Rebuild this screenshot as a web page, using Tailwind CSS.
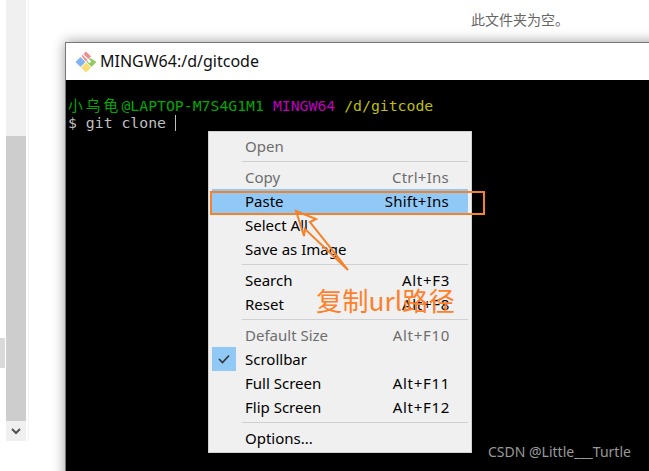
<!doctype html>
<html lang="en">
<head>
  <meta charset="UTF-8" />
  <title>MINGW64</title>
  <script src="https://cdn.jsdelivr.net/npm/@tailwindcss/browser@4"></script>
</head>
<body class="bg-white">
  <div class="relative w-[649px] h-[471px] overflow-hidden bg-white font-['Noto_Sans','Noto_Sans_CJK_SC',sans-serif]">

    <!-- page behind: scrollbar on the left -->
    <div class="absolute left-0 top-[338px] w-[5px] h-[30px] bg-[#d9d9d9]"></div>
    <div class="absolute left-[6px] top-0 w-[20px] h-[441px] flex flex-col bg-[#f0f0f0]">
      <div class="h-[136px]"></div>
      <div class="h-[285px] bg-[#cdcdcd]"></div>
      <div class="flex-1 flex items-center justify-center">
        <svg width="10" height="7" viewBox="0 0 10 7"><path d="M1 1l4 4 4-4" fill="none" stroke="#505050" stroke-width="2" /></svg>
      </div>
    </div>
    <div class="absolute left-[28px] top-0 w-[1px] h-[441px] bg-[#f2f2f2]"></div>
    <p class="absolute left-[471px] top-[9px] text-[14px] leading-[20px] text-[#666] font-['Noto_Sans_CJK_SC',sans-serif]">此文件夹为空。</p>

    <!-- terminal window -->
    <div class="absolute left-[65px] top-[42px] w-[600px] h-[440px] flex flex-col border border-[#777] shadow-[0_0_12px_rgba(0,0,0,0.4)]">
      <div class="h-[37px] bg-white flex items-center pl-[9px] gap-[3px]">
        <svg width="22" height="22" viewBox="0 0 22 22">
          <path d="M0.5 11L5.5 6l5 5-5 5z" fill="#7fb4f6" />
          <path d="M6.5 5l4.5-4.5L16 5.5l-1.5 1.5-3.5 3.5z" fill="#f28b8b" />
          <path d="M11.5 11L15.5 7l6 4-5 5z" fill="#93cb62" />
          <path d="M6 16.5l5-5 5 5-5 5z" fill="#fbdd74" />
          <path d="M8 3.5l6.5 6.5" stroke="#fff" stroke-width="1.2" />
          <circle cx="14.5" cy="10.5" r="1.4" fill="#fff" />
        </svg>
        <span class="pb-[2px] text-[16px] leading-[20px] text-[#111]">MINGW64:/d/gitcode</span>
      </div>
      <div class="flex-1 bg-black pt-[17px] pl-[2px] font-['DejaVu_Sans_Mono','Noto_Sans_CJK_SC',monospace] text-[14.8px] leading-[17px]">
        <div class="whitespace-pre"><span class="text-[#00a800]"><span class="tracking-[3px]">小乌龟</span>@LAPTOP-M7S4G1M1</span> <span class="text-[#bf00bf]">MINGW64</span> <span class="text-[#bfbf00]">/d/gitcode</span></div>
        <div class="flex items-center whitespace-pre text-[#bfbfbf]"><span>$ git clone </span><span class="w-[1px] h-[16px] bg-[#bfbfbf]"></span></div>
      </div>
    </div>

    <!-- context menu -->
    <div class="absolute left-[208px] top-[131px] w-[264px] h-[322px] flex flex-col pt-[2px] pl-[3px] pr-[3px] bg-[#f0f0f0] border border-[#a0a0a0]/40 text-[15px] text-black">
      <div class="h-[24px] flex items-center justify-between pl-[33px] pr-[19px] text-[#6d6d6d]"><span>Open</span></div>
      <div class="h-[7px] ml-[30px] flex items-center"><div class="w-full h-[1px] bg-[#d0d0d0]"></div></div>
      <div class="h-[24px] flex items-center justify-between pl-[33px] pr-[19px] text-[#6d6d6d]"><span>Copy</span><span class="tracking-[0.25px]">Ctrl+Ins</span></div>
      <div class="h-[24px] flex items-center justify-between pl-[33px] pr-[19px] bg-[#90c8f6]"><span>Paste</span><span class="tracking-[0.25px]">Shift+Ins</span></div>
      <div class="h-[24px] flex items-center justify-between pl-[33px] pr-[19px]"><span>Select All</span></div>
      <div class="h-[24px] flex items-center justify-between pl-[33px] pr-[19px]"><span>Save as Image</span></div>
      <div class="h-[7px] ml-[30px] flex items-center"><div class="w-full h-[1px] bg-[#d0d0d0]"></div></div>
      <div class="h-[24px] flex items-center justify-between pl-[33px] pr-[18px]"><span>Search</span><span class="tracking-[0.7px]">Alt+F3</span></div>
      <div class="h-[24px] flex items-center justify-between pl-[33px] pr-[18px]"><span>Reset</span><span class="tracking-[0.7px]">Alt+F8</span></div>
      <div class="h-[7px] ml-[30px] flex items-center"><div class="w-full h-[1px] bg-[#d0d0d0]"></div></div>
      <div class="h-[24px] flex items-center justify-between pl-[33px] pr-[18px] text-[#6d6d6d]"><span>Default Size</span><span class="tracking-[0.7px]">Alt+F10</span></div>
      <div class="relative h-[24px] flex items-center justify-between pl-[33px] pr-[19px]">
        <span>Scrollbar</span>
        <div class="absolute left-0 top-0 w-[24px] h-[24px] bg-[#90c8f6] flex items-center justify-center">
          <svg width="12" height="10" viewBox="0 0 12 10"><path d="M1 5l3.5 3.5L11 1.5" fill="none" stroke="#333" stroke-width="1.6" /></svg>
        </div>
      </div>
      <div class="h-[24px] flex items-center justify-between pl-[33px] pr-[18px]"><span>Full Screen</span><span class="tracking-[0.7px]">Alt+F11</span></div>
      <div class="h-[24px] flex items-center justify-between pl-[33px] pr-[18px]"><span>Flip Screen</span><span class="tracking-[0.7px]">Alt+F12</span></div>
      <div class="h-[7px] ml-[30px] flex items-center"><div class="w-full h-[1px] bg-[#d0d0d0]"></div></div>
      <div class="h-[24px] flex items-center justify-between pl-[33px] pr-[19px]"><span>Options...</span></div>
    </div>

    <!-- annotations drawn on top -->
    <div class="absolute left-[210px] top-[191px] w-[275px] h-[24px] border-2 border-[#f5812a]"></div>
    <svg class="absolute left-[290px] top-[205px]" width="70" height="75" viewBox="0 0 70 75">
      <path d="M6 6L26 14 20 17 58 65 15 24 14 31z" fill="none" stroke="#f5812a" stroke-width="2" stroke-linejoin="miter" />
    </svg>
    <p class="absolute left-[316px] top-[282px] text-[26.3px] leading-[36px] text-[#ff7f2a] font-['Noto_Sans_CJK_SC',sans-serif]">复制url路径</p>
    <p class="absolute left-[488px] top-[442px] text-[14px] leading-[20px] text-[#9a9a9a]">CSDN @Little___Turtle</p>
  </div>
</body>
</html>
